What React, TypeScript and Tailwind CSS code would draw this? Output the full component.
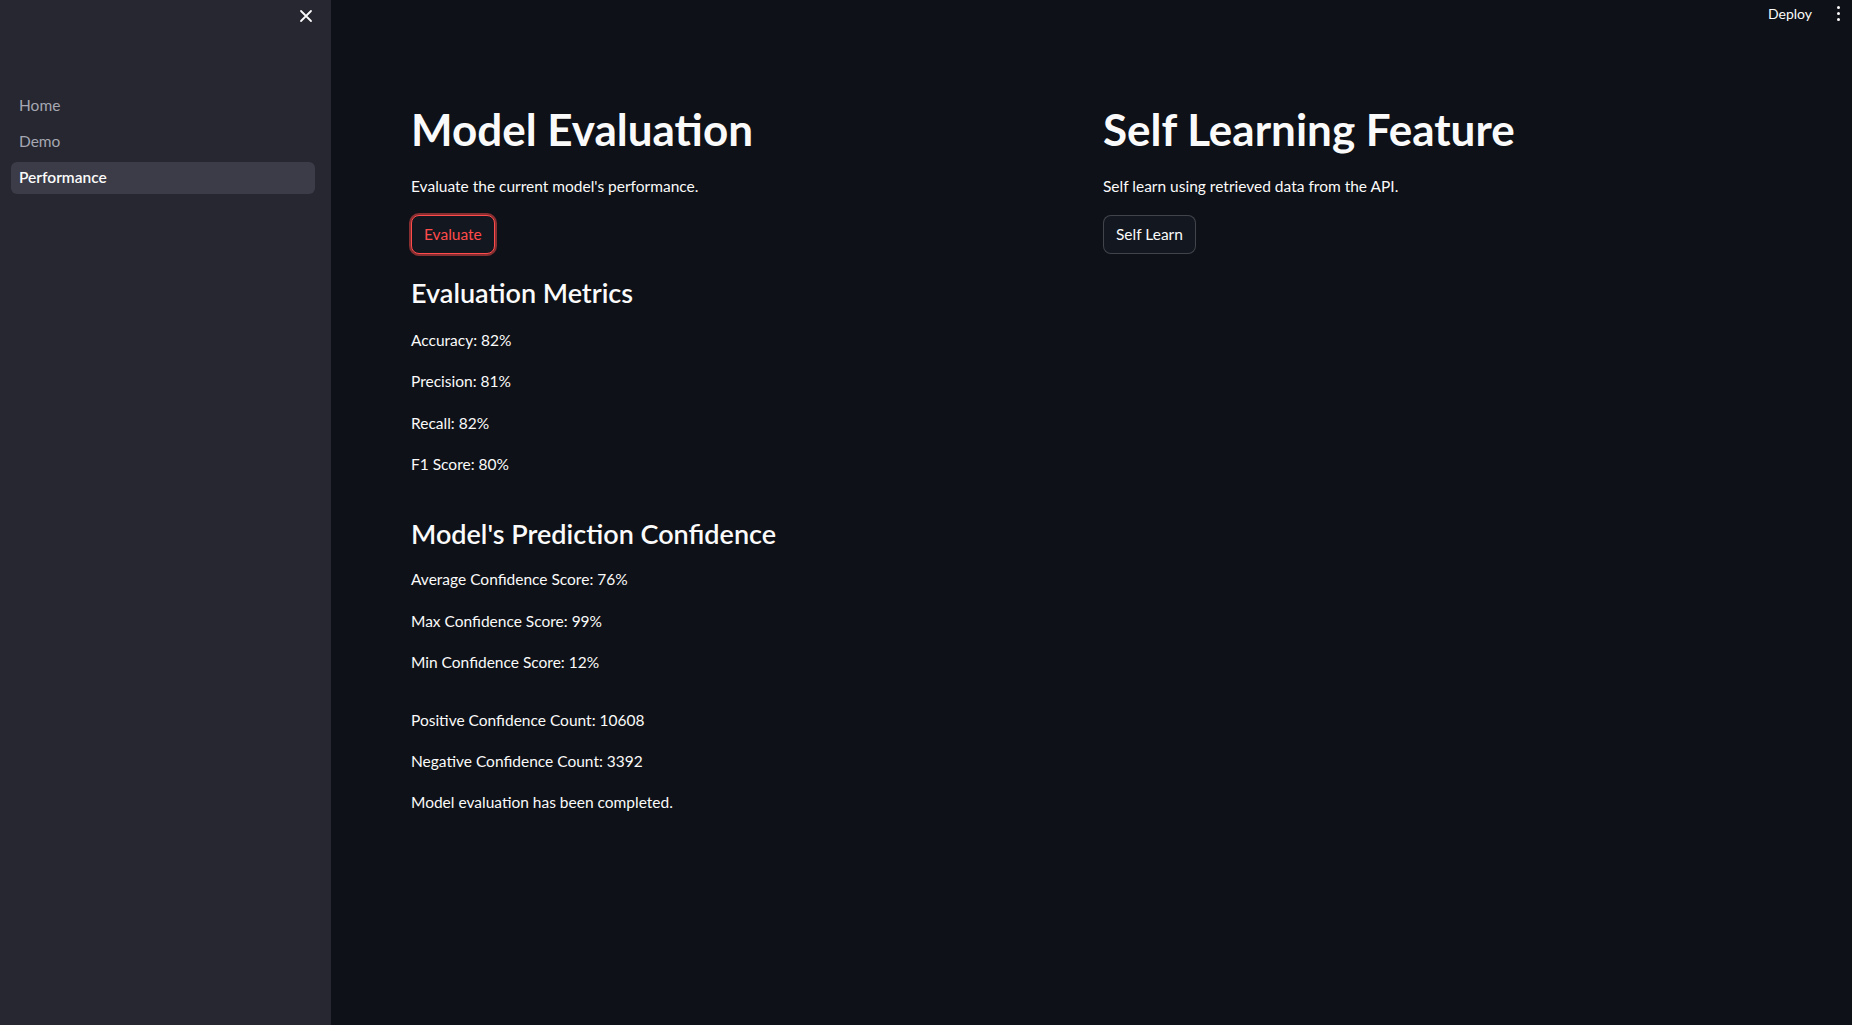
import React from "react";

const font = { fontFamily: "Lato, 'Noto Sans', sans-serif" };

type NavItem = { label: string; active?: boolean };

const navItems: NavItem[] = [
  { label: "Home" },
  { label: "Demo" },
  { label: "Performance", active: true },
];

function Sidebar() {
  return (
    <aside className="flex w-[331px] shrink-0 flex-col bg-[#262730]">
      <div className="flex h-[90px] items-start justify-end pr-[18px] pt-[8px]">
        <svg width="14" height="14" viewBox="0 0 14 14" className="mt-[1px]">
          <path d="M2 2 L12 12 M12 2 L2 12" stroke="#fafafa" strokeWidth="1.8" strokeLinecap="round" />
        </svg>
      </div>
      <nav className="flex flex-col gap-[4px] pl-[11px] pr-[16px]">
        {navItems.map((item) => (
          <div
            key={item.label}
            className={`flex h-[32px] items-center rounded-[6px] px-[8px] text-[15.5px] ${
              item.active ? "bg-[#3b3c47] font-semibold text-[#fafafa]" : "text-[#a5a8b3]"
            }`}
          >
            {item.label}
          </div>
        ))}
      </nav>
    </aside>
  );
}

function Metric({ children, mt }: { children: React.ReactNode; mt: string }) {
  return <p className={`${mt} text-[15.5px] leading-[24px] text-[#fafafa]`}>{children}</p>;
}

export default function App() {
  return (
    <div className="flex h-[1025px] w-full bg-[#0e1117]" style={font}>
      <Sidebar />
      <main className="flex flex-1 flex-col">
        <header className="flex h-[26px] items-center justify-end gap-[25px] pr-[12px]">
          <span className="text-[14px] text-[#fafafa]">Deploy</span>
          <div className="flex flex-col items-center gap-[3px]">
            <span className="h-[3px] w-[3px] rounded-full bg-[#fafafa]" />
            <span className="h-[3px] w-[3px] rounded-full bg-[#fafafa]" />
            <span className="h-[3px] w-[3px] rounded-full bg-[#fafafa]" />
          </div>
        </header>
        <div className="grid grid-cols-[692px_1fr] pl-[80px] pr-[80px] pt-[77px]">
          <section className="flex flex-col items-start">
            <h1 className="text-[44px] font-bold leading-[1.2] text-[#fafafa]">Model Evaluation</h1>
            <p className="mt-[18px] text-[15.5px] leading-[24px] text-[#fafafa]">
              Evaluate the current model's performance.
            </p>
            <button className="mt-[17px] h-[39px] rounded-[8px] border border-[#ff4b4b] bg-[#13171f] px-[12px] text-[15.5px] text-[#ff4b4b] shadow-[0_0_0_2px_rgba(255,75,75,0.5)]">
              Evaluate
            </button>
            <h3 className="mt-[23px] text-[27px] font-semibold leading-[1.2] text-[#fafafa]">Evaluation Metrics</h3>
            <Metric mt="mt-[18.5px]">Accuracy: 82%</Metric>
            <Metric mt="mt-[17.5px]">Precision: 81%</Metric>
            <Metric mt="mt-[17.5px]">Recall: 82%</Metric>
            <Metric mt="mt-[17.5px]">F1 Score: 80%</Metric>
            <h3 className="mt-[41.5px] text-[27px] font-semibold leading-[1.2] text-[#fafafa]">
              Model's Prediction Confidence
            </h3>
            <Metric mt="mt-[16.5px]">Average Confidence Score: 76%</Metric>
            <Metric mt="mt-[18px]">Max Confidence Score: 99%</Metric>
            <Metric mt="mt-[17px]">Min Confidence Score: 12%</Metric>
            <Metric mt="mt-[34px]">Positive Confidence Count: 10608</Metric>
            <Metric mt="mt-[17px]">Negative Confidence Count: 3392</Metric>
            <Metric mt="mt-[17px]">Model evaluation has been completed.</Metric>
          </section>
          <section className="flex flex-col items-start">
            <h1 className="text-[44px] font-bold leading-[1.2] text-[#fafafa]">Self Learning Feature</h1>
            <p className="mt-[18px] text-[15.5px] leading-[24px] text-[#fafafa]">
              Self learn using retrieved data from the API.
            </p>
            <button className="mt-[17px] h-[39px] rounded-[8px] border border-[rgba(250,250,250,0.2)] bg-[#13171f] px-[12px] text-[15.5px] text-[#fafafa]">
              Self Learn
            </button>
          </section>
        </div>
      </main>
    </div>
  );
}
